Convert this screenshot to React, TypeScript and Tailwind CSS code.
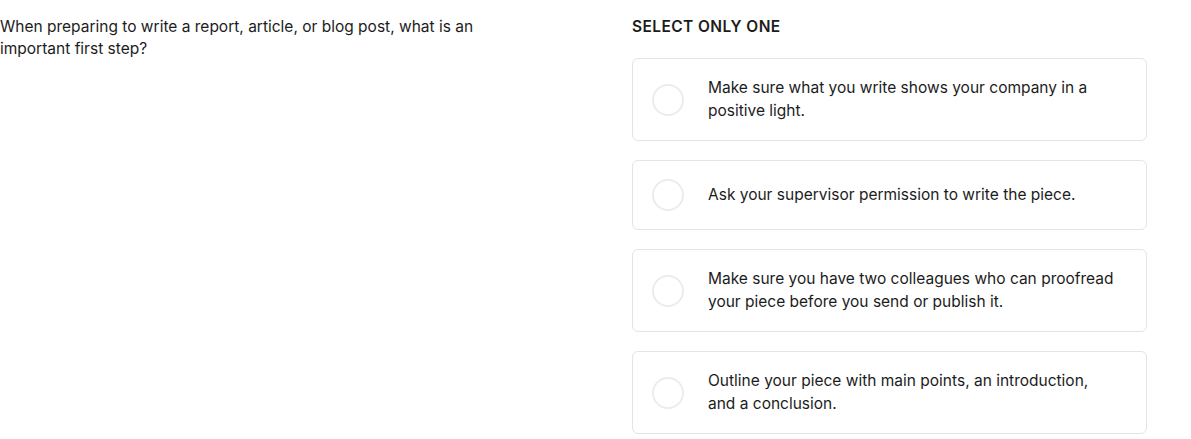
import React from 'react';

const options = [
  'Make sure what you write shows your company in a positive light.',
  'Ask your supervisor permission to write the piece.',
  'Make sure you have two colleagues who can proofread your piece before you send or publish it.',
  'Outline your piece with main points, an introduction, and a conclusion.',
];

export default function App() {
  return (
    <div
      className="flex min-h-[439px] w-full bg-white pt-4 text-[#1c1c1c]"
      style={{ fontFamily: 'Inter, "Noto Sans", sans-serif' }}
    >
      {/* Question */}
      <div className="w-[632px] shrink-0">
        <p className="w-[500px] text-[15.5px] leading-[22px]">
          When preparing to write a report, article, or blog post, what is an important first step?
        </p>
      </div>

      {/* Answers */}
      <div className="w-[515px] shrink-0">
        <div className="text-[15.5px] font-semibold leading-[22px] tracking-[0.4px]">SELECT ONLY ONE</div>
        <div className="mt-5 flex flex-col gap-[19px]">
          {options.map((text) => (
            <button
              key={text}
              className="flex min-h-[70px] w-full items-center rounded-md border border-[#e4e4e4] bg-white py-[18px] pl-[19px] pr-8 text-left"
            >
              <span className="h-8 w-8 shrink-0 rounded-full border-2 border-[#ececec]" />
              <span className="ml-6 text-[15.5px] leading-[22.5px]">{text}</span>
            </button>
          ))}
        </div>
      </div>
    </div>
  );
}
